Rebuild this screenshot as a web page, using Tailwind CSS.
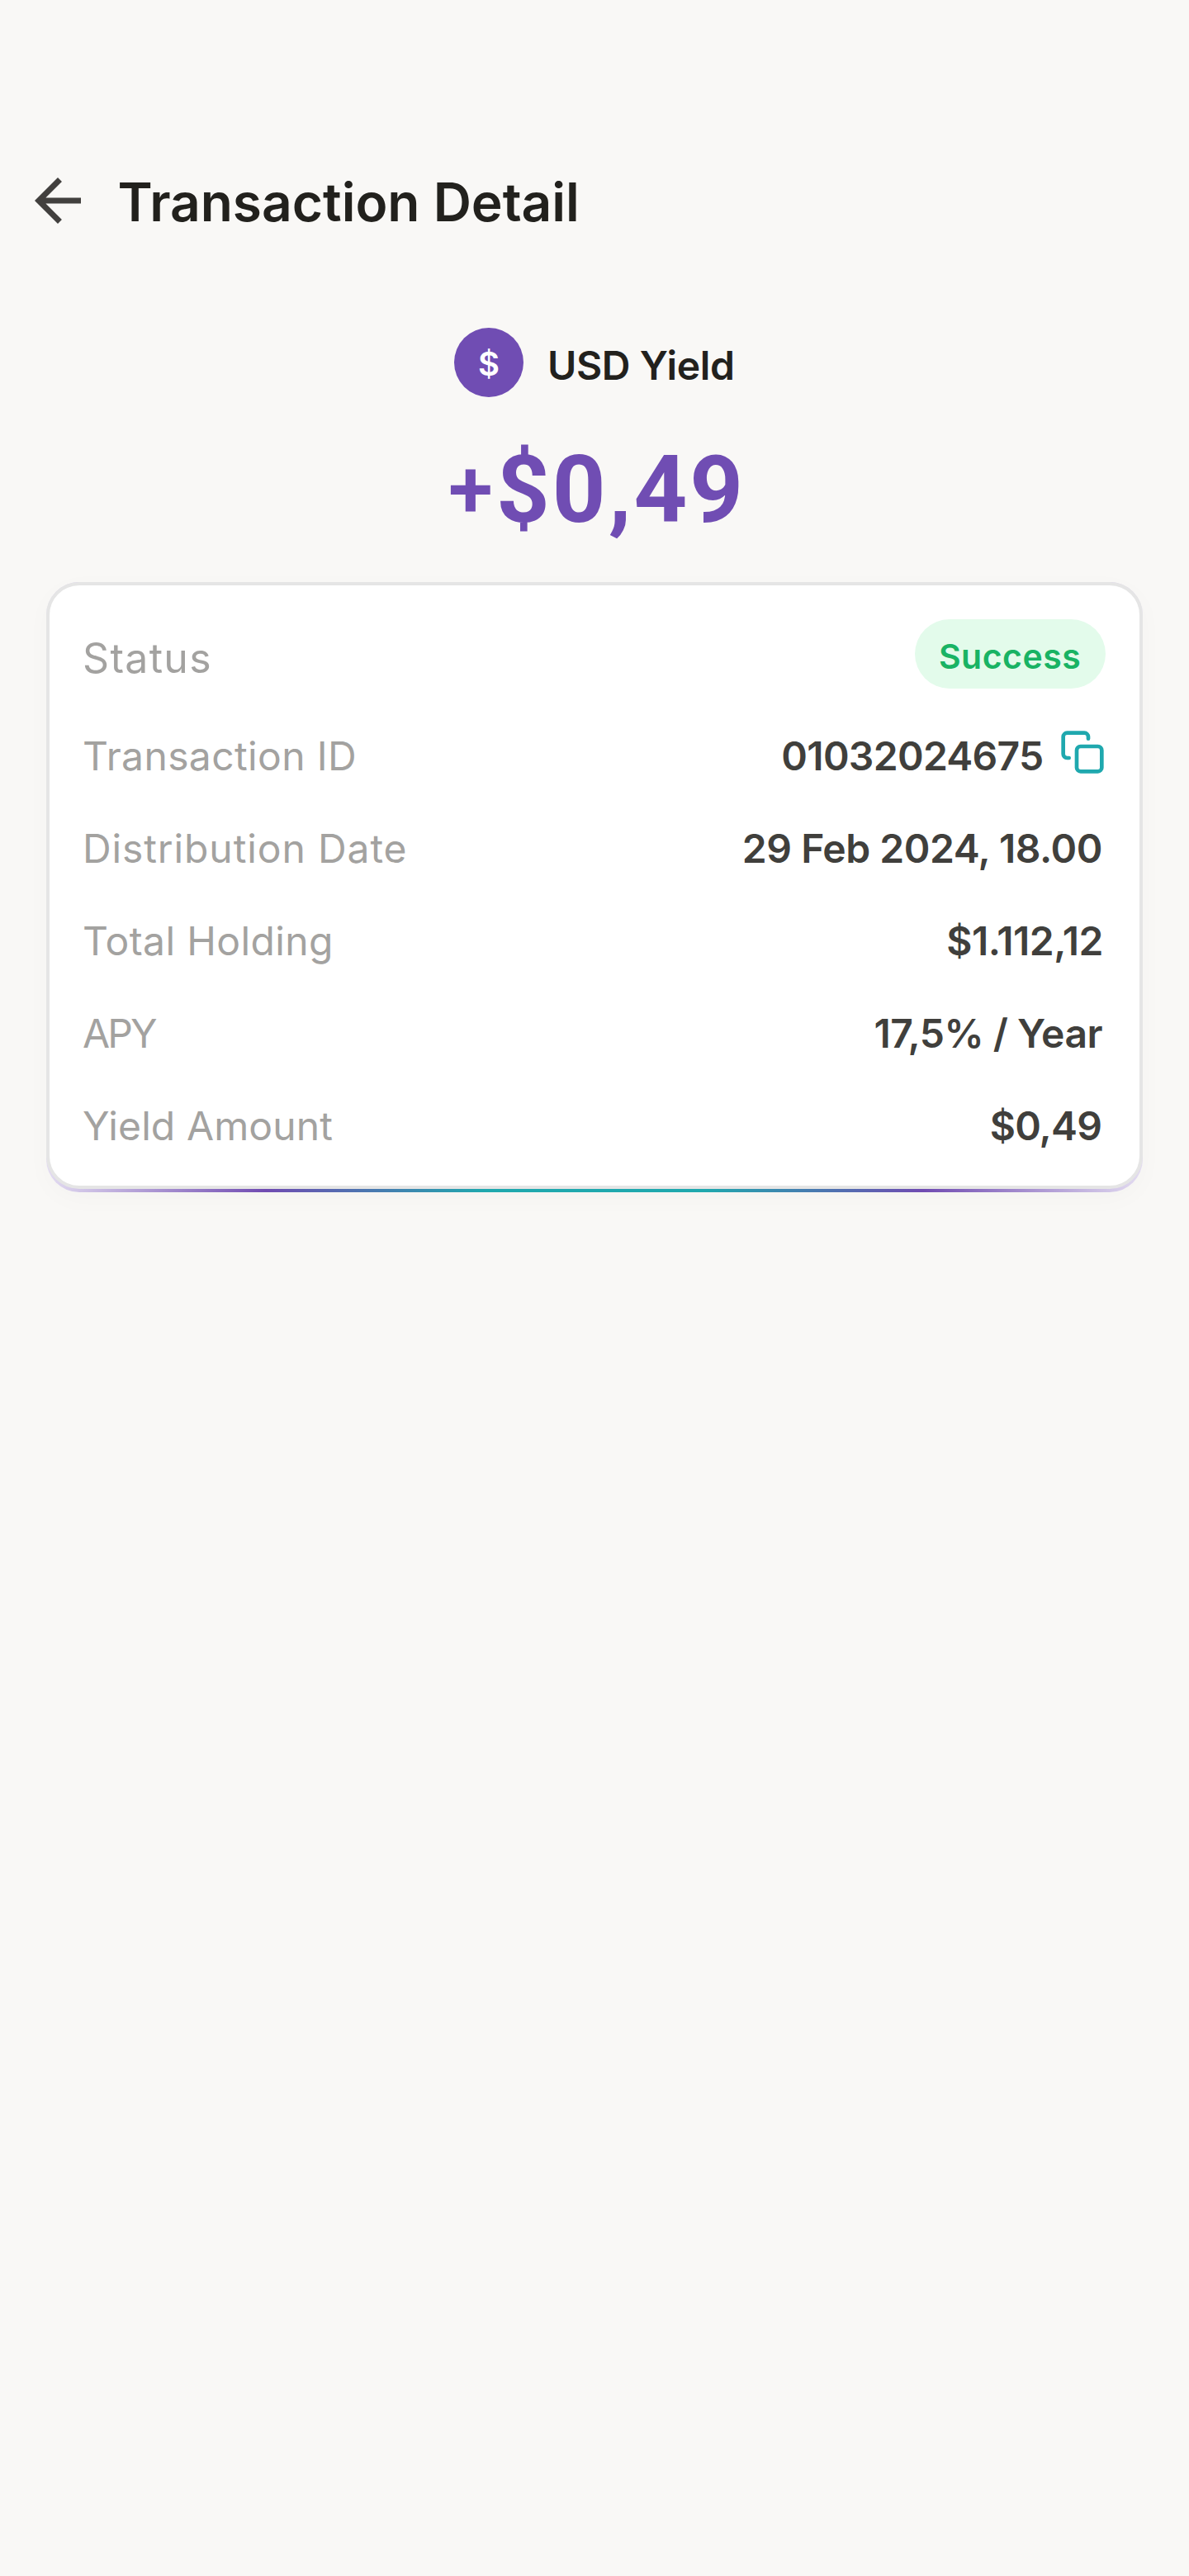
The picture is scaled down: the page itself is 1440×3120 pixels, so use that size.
<!DOCTYPE html>
<html lang="en">
<head>
<meta charset="utf-8">
<title>Transaction Detail</title>
<script src="https://cdn.jsdelivr.net/npm/@tailwindcss/browser@4"></script>
</head>
<body class="min-h-[3120px] bg-[#f9f8f6] font-['Inter',sans-serif]">
  <header class="flex items-center gap-[30.5px] pt-[201px] pl-7">
    <svg class="size-[84px] shrink-0" viewBox="0 0 24 24" fill="#42403e"><path d="M20 11H7.83l5.59-5.59L12 4l-8 8 8 8 1.41-1.41L7.83 13H20v-2z"/></svg>
    <h1 class="pt-1 text-[64px] leading-[80px] font-semibold text-[#22211d]">Transaction Detail</h1>
  </header>

  <main>
    <section class="pt-[112px]">
      <div class="flex h-[84px] items-center pl-[550px]">
        <div class="flex size-[84px] items-center justify-center rounded-full bg-[#704db3] pt-[3px] text-[40px] leading-none font-semibold text-white">$</div>
        <div class="pt-2 pl-[29px] text-[48px] leading-[64px] font-semibold tracking-[-0.36px] text-[#22211d]">USD Yield</div>
      </div>
      <div class="flex h-[152px] items-baseline pt-[53px] pl-[543px] font-['Roboto',sans-serif] text-[113px] leading-[120px] font-bold text-[#704db3]"><span class="w-[58px] -translate-y-[6px] text-[98px] font-semibold">+</span><span class="tracking-[3px]">$0,49</span></div>
    </section>

    <section class="mx-14 mt-[72px] rounded-[40px] bg-[linear-gradient(90deg,#e3dcf1_0%,#704bb2_20%,#1fa8ae_40%,#1fa8ae_60%,#704bb2_80%,#e3dcf1_100%)] pb-1 shadow-[0_8px_32px_rgba(60,40,20,0.025)]">
      <dl class="flex h-[735px] flex-col gap-12 rounded-[40px] border-4 border-[#e5e5e5] bg-white pt-[41px] pr-11 pl-10 text-[48px] leading-[64px]">
        <div class="mb-[2px] flex h-[84px] shrink-0 items-center justify-between">
          <dt class="pt-[9px] text-[50px] tracking-[1.3px] text-[#a3a2a0]">Status</dt>
          <dd class="mr-[-2.6px] flex h-[84px] w-[231px] items-center justify-center rounded-full bg-[#e3fbeb] pt-[5px] text-[41px] font-semibold tracking-[0.5px] text-[#19b364]">Success</dd>
        </div>
        <div class="flex h-16 justify-between">
          <dt class="tracking-[0.37px] text-[#a3a2a0]">Transaction ID</dt>
          <dd class="mr-[-2.6px] flex gap-[19px] font-semibold tracking-[-0.7px] text-[#403f3c]">01032024675
            <svg class="-mt-px size-14" viewBox="0 0 24 24" fill="none" stroke="#1fa8ae" stroke-width="2" stroke-linecap="round" stroke-linejoin="round"><rect x="9" y="9" width="13" height="13" rx="2"/><path d="M5 15H4a2 2 0 0 1-2-2V4a2 2 0 0 1 2-2h9a2 2 0 0 1 2 2v1"/></svg>
          </dd>
        </div>
        <div class="flex h-16 justify-between">
          <dt class="tracking-[0.89px] text-[#a3a2a0]">Distribution Date</dt>
          <dd class="pr-px font-semibold tracking-[-0.47px] text-[#403f3c]">29 Feb 2024, 18.00</dd>
        </div>
        <div class="flex h-16 justify-between">
          <dt class="tracking-[0.37px] text-[#a3a2a0]">Total Holding</dt>
          <dd class="font-semibold tracking-[-0.5px] text-[#403f3c]">$1.112,12</dd>
        </div>
        <div class="flex h-16 justify-between">
          <dt class="tracking-[-2.9px] text-[#a3a2a0]">APY</dt>
          <dd class="pr-px font-semibold tracking-[-0.5px] text-[#403f3c]">17,5% / Year</dd>
        </div>
        <div class="flex h-16 justify-between">
          <dt class="tracking-[0.1px] text-[#a3a2a0]">Yield Amount</dt>
          <dd class="pr-[2px] font-semibold tracking-[-0.87px] text-[#403f3c]">$0,49</dd>
        </div>
      </dl>
    </section>
  </main>
</body>
</html>
